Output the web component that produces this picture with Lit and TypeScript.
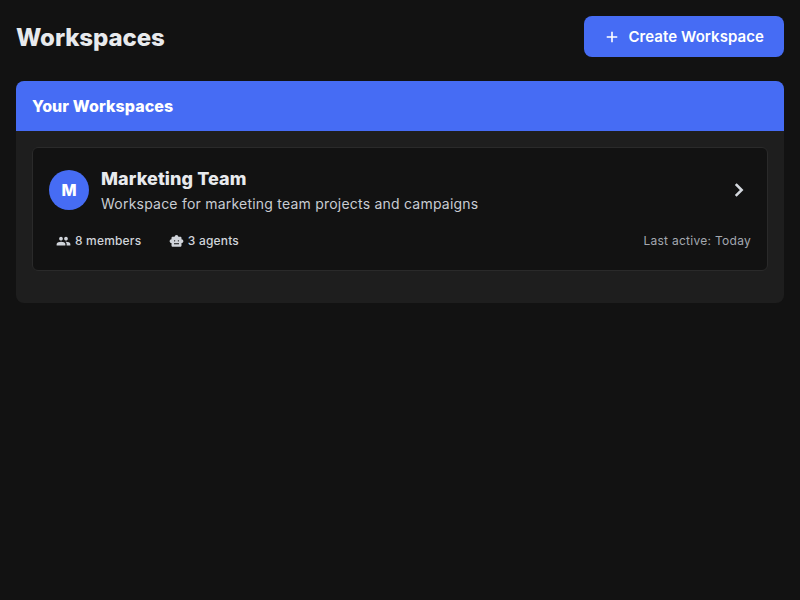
import { LitElement, html, css } from "lit";
import { customElement } from "lit/decorators.js";

interface Workspace {
  name: string;
  description: string;
  members: number;
  agents: number;
  lastActive: string;
}

const workspaces: Workspace[] = [
  {
    name: "Marketing Team",
    description: "Workspace for marketing team projects and campaigns",
    members: 8,
    agents: 3,
    lastActive: "Today",
  },
];

@customElement("app-root")
export class AppRoot extends LitElement {
  static styles = css`
    :host {
      display: block;
      box-sizing: border-box;
      min-height: 100vh;
      padding: 16px;
      background: #121212;
      color: #e8eaed;
      font-family: Inter, sans-serif;
    }
    svg { display: block; fill: currentColor; flex: none; }
    .top {
      display: flex;
      align-items: center;
      justify-content: space-between;
      height: 41px;
      margin-bottom: 24px;
    }
    h1 { margin: 0; padding-top: 2px; font-size: 24px; font-weight: 800; line-height: 32px; letter-spacing: -0.1px; }
    .create {
      display: flex;
      align-items: center;
      box-sizing: border-box;
      width: 200px;
      height: 41px;
      padding: 0 20px;
      gap: 8px;
      border: 0;
      border-radius: 8px;
      background: #466cf4;
      color: #fff;
      font: 600 15px/20px Inter, sans-serif;
      letter-spacing: 0.06px;
      white-space: nowrap;
    }
    .create span { margin-left: 0.5px; }
    .panel { border-radius: 8px; overflow: hidden; background: #1e1e1e; }
    .panel-head {
      padding: 0 16px;
      background: #466cf4;
      color: #fff;
      font-size: 16px;
      font-weight: 800;
      line-height: 50px;
      letter-spacing: 0.07px;
    }
    .panel-body { padding: 16px 16px 32px; }
    .card {
      box-sizing: border-box;
      height: 124px;
      padding: 17px 16px 15px;
      border: 1px solid #2a2a2a;
      border-radius: 6px;
      background: #121212;
    }
    .summary { display: flex; align-items: center; height: 50px; }
    .avatar {
      width: 40px;
      height: 40px;
      margin-right: 12px;
      border-radius: 50%;
      background: #466cf4;
      color: #fff;
      font-size: 16px;
      font-weight: 800;
      line-height: 40px;
      text-align: center;
    }
    .text { flex: 1; padding-top: 2px; }
    .name { font-size: 18px; font-weight: 800; line-height: 26px; letter-spacing: 0.08px; }
    .description { font-size: 14px; line-height: 24px; color: #c8ccd2; letter-spacing: 0.22px; }
    .chevron { color: #d4d8de; }
    .stats {
      display: flex;
      align-items: center;
      margin-top: 16px;
      padding-left: 7px;
      font-size: 12px;
      line-height: 20px;
      color: #d0d4da;
      letter-spacing: 0.18px;
    }
    .stat { display: flex; align-items: center; gap: 4px; margin-right: 27.5px; font-weight: 500; }
    .active { margin-left: auto; color: #a3a8b0; letter-spacing: 0.28px; }
  `;

  render() {
    return html`
      <header class="top">
        <h1>Workspaces</h1>
        <button class="create">
          <svg width="16" height="16" viewBox="0 0 24 24"><path d="M19.900 13.200h-6.700v6.700h-2.400v-6.700H4.100v-2.400h6.700V4.100h2.400v6.700h6.700z"/></svg>
          <span>Create Workspace</span>
        </button>
      </header>
      <section class="panel">
        <div class="panel-head">Your Workspaces</div>
        <div class="panel-body">
          ${workspaces.map((w) => html`
            <article class="card">
              <div class="summary">
                <div class="avatar">${w.name[0]}</div>
                <div class="text">
                  <div class="name">${w.name}</div>
                  <div class="description">${w.description}</div>
                </div>
                <svg class="chevron" width="24" height="24" viewBox="0 0 24 24"><path d="M9.600 6.900 14.700 12l-5.100 5.100" fill="none" stroke="currentColor" stroke-width="2.500" stroke-linecap="square"/></svg>
              </div>
              <div class="stats">
                <div class="stat">
                  <svg width="15" height="15" viewBox="0 0.600 24 24"><path d="M16 11c1.660 0 2.990-1.340 2.990-3S17.660 5 16 5s-3 1.340-3 3 1.340 3 3 3zm-8 0c1.660 0 2.990-1.340 2.990-3S9.660 5 8 5 5 6.340 5 8s1.340 3 3 3zm0 2c-2.330 0-7 1.170-7 3.500V19h14v-2.500c0-2.330-4.670-3.500-7-3.500zm8 0c-.290 0-.620.020-.970.050 1.160.840 1.970 1.970 1.970 3.450V19h6v-2.500c0-2.330-4.670-3.500-7-3.500z"/></svg>
                  <span>${w.members} members</span>
                </div>
                <div class="stat">
                  <svg width="15" height="15" viewBox="0 0.600 24 24"><path fill-rule="evenodd" d="M20 9V7c0-1.100-.9-2-2-2h-3c0-1.660-1.340-3-3-3S9 3.340 9 5H6c-1.100 0-2 .9-2 2v2c-1.660 0-3 1.340-3 3s1.340 3 3 3v4c0 1.100.9 2 2 2h12c1.100 0 2-.9 2-2v-4c1.660 0 3-1.340 3-3s-1.340-3-3-3zM7.900 11.500a1.100 1.100 0 1 1 2.200 0 1.100 1.100 0 1 1-2.200 0zM16 17H8v-1.500h8zM13.900 11.500a1.100 1.100 0 1 1 2.200 0 1.100 1.100 0 1 1-2.200 0z"/></svg>
                  <span>${w.agents} agents</span>
                </div>
                <div class="active">Last active: ${w.lastActive}</div>
              </div>
            </article>
          `)}
        </div>
      </section>
    `;
  }
}
